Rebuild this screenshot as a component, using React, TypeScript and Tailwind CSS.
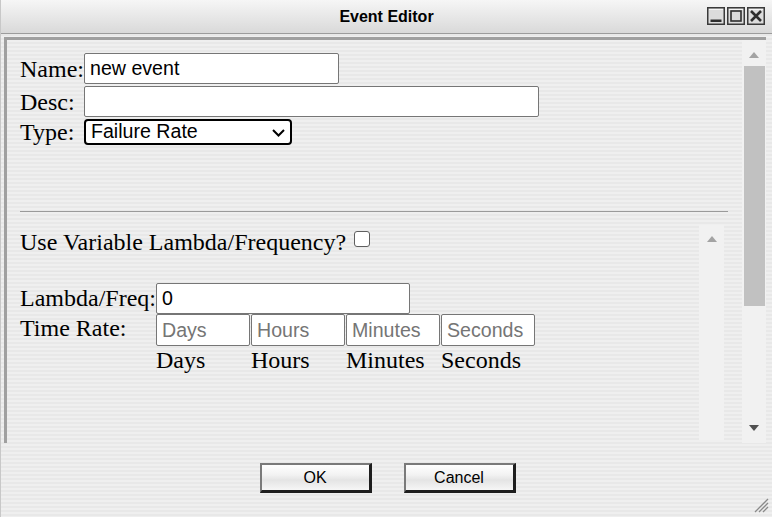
import { useState } from "react";

const stripes =
  "bg-[repeating-linear-gradient(to_bottom,#efefef_0px,#efefef_2px,#e8e8e8_2px,#e8e8e8_4px)]";

const UpArrow = ({ color = "#a3a3a3" }: { color?: string }) => (
  <svg width="10" height="6" viewBox="0 0 10 6">
    <polygon points="0,6 5,0 10,6" fill={color} />
  </svg>
);

const DownArrow = ({ color = "#505050" }: { color?: string }) => (
  <svg width="10" height="6" viewBox="0 0 10 6">
    <polygon points="0,0 10,0 5,6" fill={color} />
  </svg>
);

const WinButton = ({ kind }: { kind: "min" | "max" | "close" }) => (
  <svg width="18" height="18" viewBox="0 0 18 18">
    <rect x="0.75" y="0.75" width="16.5" height="16.5" fill="#dcdcdc" stroke="#3a3a3a" strokeWidth="1.5" />
    <rect x="2" y="2" width="14" height="1" fill="#f4f4f4" />
    {kind === "min" && <rect x="3.5" y="12.5" width="11" height="2.5" fill="#2e2e2e" />}
    {kind === "max" && (
      <rect x="4" y="4" width="10" height="10" fill="none" stroke="#2e2e2e" strokeWidth="1.6" />
    )}
    {kind === "close" && (
      <path d="M4 4 L14 14 M14 4 L4 14" stroke="#2e2e2e" strokeWidth="2.6" />
    )}
  </svg>
);

const DialogButton = ({ children }: { children: React.ReactNode }) => (
  <button className="w-[112px] h-[30px] border-t-2 border-l-2 border-r-[3px] border-b-[3px] border-t-[#7a7a7a] border-l-[#7a7a7a] border-r-[#1e1e1e] border-b-[#1e1e1e] bg-[linear-gradient(to_bottom,#ffffff_0%,#f2f2f2_40%,#e4e4e4_60%,#f6f6f6_100%)] font-['Liberation_Sans',sans-serif] text-[16px] text-black leading-none">
    {children}
  </button>
);

const fieldCls =
  "h-[31px] bg-white border border-[#767676] rounded-[2px] px-[5px] font-['Liberation_Sans',sans-serif] text-[19.6px] text-black outline-none placeholder:text-[#757575]";

export default function App() {
  const [name, setName] = useState("new event");
  const [desc, setDesc] = useState("");
  const [type, setType] = useState("Failure Rate");
  const [lambda, setLambda] = useState("0");
  const [variable, setVariable] = useState(false);

  const units = ["Days", "Hours", "Minutes", "Seconds"];

  return (
    <div
      className={`relative w-[772px] h-[517px] flex flex-col border-l border-[#c8c8c8] ${stripes} font-['Liberation_Serif',serif] text-[24px] text-black overflow-hidden`}
    >
      {/* title bar */}
      <div className="h-[34px] grid grid-cols-[1fr_auto_1fr] items-center border-b border-[#9c9c9c] bg-[linear-gradient(to_bottom,#f6f6f6,#d9d9d9)]">
        <div />
        <div className="font-['Liberation_Sans',sans-serif] font-bold text-[16px] pt-px">
          Event Editor
        </div>
        <div className="flex justify-end gap-[2px] pr-[7px] pb-px">
          <WinButton kind="min" />
          <WinButton kind="max" />
          <WinButton kind="close" />
        </div>
      </div>

      {/* content box */}
      <div className="mt-[3px] ml-[3px] w-[762px] h-[406px] flex border-t-[3px] border-l-[3px] border-[#a0a0a0]">
        <div className="flex-1 pl-[13px] pt-[13px] flex flex-col">
          <div className="flex items-center h-[31px]">
            <span className="w-[64px] leading-none">Name:</span>
            <input className={`${fieldCls} w-[255px]`} value={name} onChange={(e) => setName(e.target.value)} />
          </div>
          <div className="flex items-center h-[31px] mt-[2px]">
            <span className="w-[64px] leading-none">Desc:</span>
            <input className={`${fieldCls} w-[455px]`} value={desc} onChange={(e) => setDesc(e.target.value)} />
          </div>
          <div className="flex items-center h-[26px] mt-[2px]">
            <span className="w-[64px] leading-none">Type:</span>
            <div className="relative flex">
              <select
                className="appearance-none w-[208px] h-[26px] bg-white border-2 border-black rounded-[4px] pl-[5px] font-['Liberation_Sans',sans-serif] text-[19.6px] leading-none outline-none"
                value={type}
                onChange={(e) => setType(e.target.value)}
              >
                <option>Failure Rate</option>
                <option>Probability</option>
              </select>
              <svg
                className="absolute right-[7px] top-[10px] pointer-events-none"
                width="13"
                height="8"
                viewBox="0 0 13 8"
              >
                <path d="M1 1 L6.5 6.5 L12 1" fill="none" stroke="#000" strokeWidth="2" />
              </svg>
            </div>
          </div>

          <div className="mt-[66px] w-[708px] h-px bg-[#9a9a9a]" />

          {/* inner scroll area */}
          <div className="mt-[13px] w-[704px] h-[215px] flex">
            <div className="flex-1 flex flex-col">
              <div className="h-[28px] mt-[3px] flex items-center">
                <span className="leading-none">Use Variable Lambda/Frequency?</span>
                <input
                  type="checkbox"
                  checked={variable}
                  onChange={(e) => setVariable(e.target.checked)}
                  className="appearance-none ml-[8px] w-[16px] h-[16px] mt-[-6px] bg-white border border-[#5f5f5f] rounded-[3px]"
                />
              </div>

              <div className="flex items-center h-[30px] mt-[27px]">
                <span className="w-[136px] leading-none">Lambda/Freq:</span>
                <input
                  className={`${fieldCls} w-[254px] h-[30px]`}
                  value={lambda}
                  onChange={(e) => setLambda(e.target.value)}
                />
              </div>

              <div className="flex mt-px">
                <span className="w-[136px] h-[28px] flex items-center leading-none">Time Rate:</span>
                <div className="flex gap-px">
                  {units.map((u) => (
                    <div key={u} className="w-[94px] flex flex-col">
                      <input className={`${fieldCls} w-[94px] h-[32px]`} placeholder={u} />
                      <span className="h-[27px] flex items-center leading-none">{u}</span>
                    </div>
                  ))}
                </div>
              </div>
            </div>
            <div className="w-[25px] bg-[#f1f1f1] flex justify-center pt-[11px]">
              <UpArrow />
            </div>
          </div>
        </div>

        {/* outer scrollbar */}
        <div className="w-[24px] bg-[#f1f1f1] flex flex-col items-center">
          <div className="h-[26px] flex items-center pt-[3px]">
            <UpArrow />
          </div>
          <div className="w-[21px] h-[240px] bg-[#c1c1c1]" />
          <div className="flex-1" />
          <div className="h-[18px] flex items-start">
            <DownArrow />
          </div>
        </div>
      </div>

      {/* buttons */}
      <div className="mt-[20px] flex justify-center gap-[32px] pl-[2px]">
        <DialogButton>OK</DialogButton>
        <DialogButton>Cancel</DialogButton>
      </div>

      <svg className="absolute right-[3px] bottom-[4px]" width="16" height="16" viewBox="0 0 16 16">
        <path d="M15 2 L2 15 M15 6 L6 15 M15 10 L10 15" stroke="#8a8a8a" strokeWidth="1.3" />
      </svg>
    </div>
  );
}
